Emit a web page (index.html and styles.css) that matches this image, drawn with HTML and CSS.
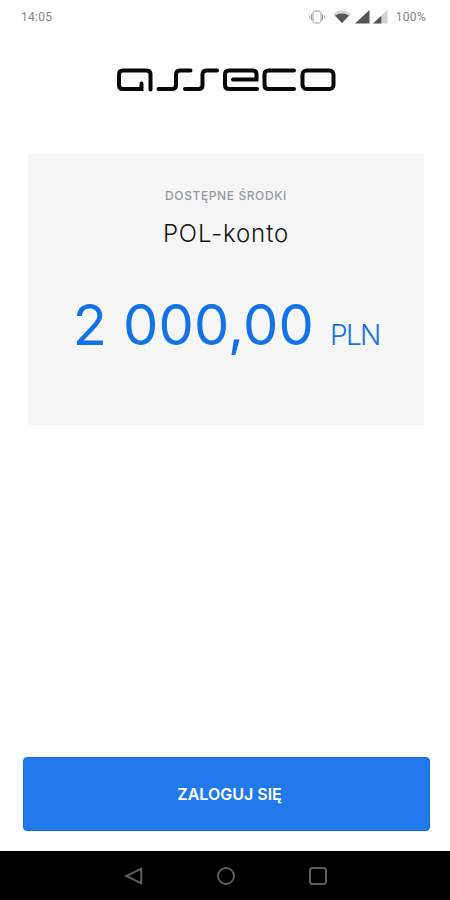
FILE: index.html
```html
<!DOCTYPE html>
<html lang="pl">
<head>
    <meta charset="UTF-8">
    <meta name="viewport" content="width=device-width, initial-scale=1.0">
    <title>Asseco</title>
    <link rel="stylesheet" href="styles.css">
</head>
<body>
    <header class="status-bar">
        <span class="clock">14:05</span>
        <div class="status-icons">
            <svg class="icon-vibrate" width="16" height="14" viewBox="0 0 16 14">
                <path d="M5.500 1h5l1.500 1.500v9l-1.500 1.500h-5l-1.500-1.500v-9zM2.500 4v6M13.500 4v6M.7 5.500v3M15.300 5.500v3"/>
            </svg>
            <svg class="icon-wifi" width="20" height="14" viewBox="0 0 20 14">
                <path class="faint" d="M1 4Q10-3 19 4L10 13.500z"/>
                <path class="solid" d="M3 5.500Q10 1.500 17 5.500L10 13z"/>
            </svg>
            <svg class="icon-signal" width="15" height="14" viewBox="0 0 15 14">
                <path class="solid" d="M14.500 0v13.500H0z"/>
            </svg>
            <svg class="icon-signal-low" width="15" height="14" viewBox="0 0 15 14">
                <path class="faint" d="M14.500 0v13.500H0z"/>
                <path class="solid" d="M8.300 5.800v7.700H0z"/>
            </svg>
            <span class="battery">100%</span>
        </div>
    </header>

    <main class="content">
        <svg class="logo" width="222" height="26" viewBox="115 67 222 26" role="img" aria-label="asseco">
            <path d="M150.500 89.500V74.500q0-4-4-4H123q-4 0-4 4V85q0 4 4 4h18.500v-5.500"/>
            <path d="M158.500 89H172q4 0 4-4V74.500q0-4 4-4h10.500"/>
            <path d="M185 89h13.500q4 0 4-4V74.500q0-4 4-4H217"/>
            <path d="M257 89h-28q-4 0-4-4V74.500q0-4 4-4h23.500q4 0 4 4v5H233"/>
            <path d="M294 70.500h-25.500q-4 0-4 4V85q0 4 4 4H294"/>
            <rect x="302.500" y="70.500" width="31" height="18.500" rx="4"/>
        </svg>

        <section class="card">
            <p class="card-label">DOSTĘPNE ŚRODKI</p>
            <h1 class="account-name">POL-konto</h1>
            <div class="balance">
                <span class="amount">2 000,00</span>
                <span class="currency">PLN</span>
            </div>
        </section>

        <button class="login-button" type="button">ZALOGUJ SIĘ</button>
    </main>

    <nav class="nav-bar">
        <svg width="20" height="20" viewBox="0 0 20 20">
            <path d="M17.300 2.500v15L2.300 10z"/>
        </svg>
        <svg width="20" height="20" viewBox="0 0 20 20">
            <circle cx="10" cy="10" r="8"/>
        </svg>
        <svg width="20" height="20" viewBox="0 0 20 20">
            <rect x="2" y="2" width="16" height="16" rx="2.500"/>
        </svg>
    </nav>
</body>
</html>
```
FILE: styles.css
```css
* {
    box-sizing: border-box;
}

body {
    display: flex;
    flex-direction: column;
    height: 100vh;
    margin: 0;
    background: #fefefe;
    font-family: Inter, "Liberation Sans", sans-serif;
    overflow: hidden;
}

.status-bar {
    display: flex;
    align-items: center;
    justify-content: space-between;
    height: 34px;
    padding: 0 24px 0 21px;
    color: #858585;
    font-family: Roboto, sans-serif;
    font-size: 12px;
}

.clock {
    letter-spacing: 0.3px;
}

.status-icons {
    display: flex;
    align-items: center;
}

.icon-vibrate {
    margin-right: 7px;
    fill: none;
    stroke: #999;
    stroke-width: 1;
}

.icon-wifi,
.icon-signal {
    margin-right: 3px;
}

.icon-signal-low {
    margin-right: 8px;
}

.battery {
    letter-spacing: 0.3px;
}

.solid {
    fill: #555;
}

.faint {
    fill: #d2d2d2;
}

.content {
    display: flex;
    flex: 1;
    flex-direction: column;
    padding: 33px 20px 20px 23px;
}

.logo {
    align-self: center;
    margin-right: 1px;
    fill: none;
    stroke: #080808;
    stroke-width: 4;
    stroke-linecap: round;
}

.card {
    display: flex;
    flex-direction: column;
    align-items: center;
    height: 271px;
    margin: 61px 6px 0 5px;
    padding-top: 34px;
    background: #f6f6f6;
}

.card-label {
    margin: 0;
    color: #939aa5;
    font-size: 12px;
    font-weight: 500;
    letter-spacing: 0.6px;
    line-height: 16px;
}

.account-name {
    margin: 14px 0 0;
    color: #151515;
    font-size: 24px;
    font-weight: 300;
    letter-spacing: 0.9px;
    line-height: 32px;
}

.balance {
    display: flex;
    align-items: baseline;
    gap: 16px;
    margin-top: 41px;
    color: #1272e6;
    line-height: 68px;
}

.amount {
    font-size: 56px;
    letter-spacing: 0.2px;
}

.currency {
    font-size: 28px;
    font-weight: 300;
    letter-spacing: -1.8px;
}

.login-button {
    height: 74px;
    margin-top: auto;
    padding: 0 0 0 6px;
    border: 1px solid #0f6ee5;
    border-radius: 4px;
    background: #2279ec;
    color: #fff;
    font-family: inherit;
    font-size: 16px;
    font-weight: 600;
    cursor: pointer;
}

.nav-bar {
    display: flex;
    align-items: center;
    justify-content: center;
    gap: 72px;
    height: 49px;
    padding-left: 1px;
    background: #000;
    fill: none;
    stroke: #5c5c5c;
    stroke-width: 2;
}
```
